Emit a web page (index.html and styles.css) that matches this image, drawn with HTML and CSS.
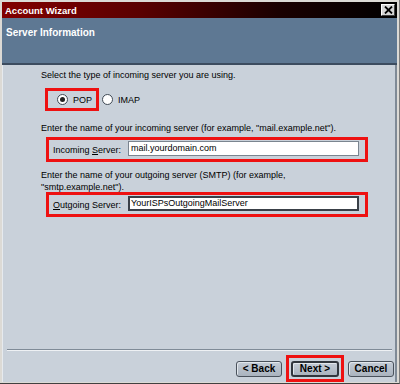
FILE: index.html
```html
<!DOCTYPE html>
<html>
<head>
<meta charset="utf-8">
<link rel="stylesheet" href="styles.css">
</head>
<body>
<div class="window">
  <div class="titlebar">
    <span class="title">Account Wizard</span>
    <span class="close"><svg width="9" height="8" viewBox="0 0 9 8"><path d="M1 0.5 L8 7.5 M8 0.5 L1 7.5" stroke="#000" stroke-width="1.8"/></svg></span>
  </div>
  <div class="header">Server Information</div>
  <div class="content">
    <p class="line l1">Select the type of incoming server you are using.</p>
    <div class="radios">
      <div class="hl pop"><span class="radio checked"></span><span>POP</span></div>
      <div class="imap"><span class="radio"></span><span>IMAP</span></div>
    </div>
    <p class="line l2">Enter the name of your incoming server (for example, "mail.example.net").</p>
    <div class="hl field in">
      <span class="lbl">Incoming <u>S</u>erver:</span>
      <span class="input">mail.yourdomain.com</span>
    </div>
    <p class="line l3">Enter the name of your outgoing server (SMTP) (for example,<br>"smtp.example.net").</p>
    <div class="hl field out">
      <span class="lbl"><u>O</u>utgoing Server:</span>
      <span class="input focus">YourISPsOutgoingMailServer</span>
    </div>
    <div class="spacer"></div>
    <div class="sep"></div>
    <div class="buttons">
      <span class="btn">&lt; Back</span>
      <span class="hl btnwrap"><span class="btn">Next &gt;</span></span>
      <span class="btn">Cancel</span>
    </div>
  </div>
</div>
</body>
</html>
```

FILE: styles.css
```css
* { box-sizing: border-box; }
html, body { margin: 0; padding: 0; }
body {
  width: 400px;
  height: 384px;
  overflow: hidden;
  font-family: "Liberation Sans", Arial, sans-serif;
  font-size: 9px;
  color: #000;
  background: #d4d0c8;
}
.window {
  width: 400px;
  height: 384px;
  padding: 2px 2px 1px 2px;
  background: #dcdad5;
  border-right: 1px solid #7d7d7d;
  border-bottom: 1px solid #404040;
  display: flex;
  flex-direction: column;
}
.titlebar {
  height: 16px;
  background: linear-gradient(to right, #820000 0%, #5a0000 35%, #1a0000 70%, #000 100%);
  display: flex;
  align-items: center;
  justify-content: space-between;
  padding: 0 2px 0 3px;
}
.title {
  color: #fff;
  font-weight: bold;
  font-size: 9.5px;
}
.close {
  width: 14px;
  height: 12px;
  background: #d6d6d6;
  border: 1px solid;
  border-color: #fff #404040 #404040 #fff;
  display: flex;
  align-items: center;
  justify-content: center;
}
.header {
  height: 47px;
  background: #5e7893;
  border-bottom: 2px solid #3c4c5f;
  color: #fff;
  font-weight: bold;
  font-size: 10px;
  padding: 9px 0 0 4px;
}
.content {
  flex: 1;
  background: #c9d1da;
  border-left: 1px solid #e6eaee;
  border-right: 2px solid #7f8a96;
  display: flex;
  flex-direction: column;
}
.line {
  margin: 0;
  padding-left: 38px;
  line-height: 12px;
  white-space: nowrap;
}
.l1 { margin-top: 4px; }
.radios {
  display: flex;
  align-items: center;
  margin-top: 7px;
  margin-left: 42px;
}
.hl {
  border: 3px solid #ee1111;
}
.pop {
  width: 54px;
  height: 23px;
  display: flex;
  align-items: center;
  padding-left: 9px;
  gap: 5px;
}
.imap {
  display: flex;
  align-items: center;
  gap: 5px;
  margin-left: 3px;
}
.radio {
  width: 11px;
  height: 11px;
  border-radius: 50%;
  background: #fff;
  border: 1px solid #404a55;
  display: inline-flex;
  align-items: center;
  justify-content: center;
}
.radio.checked::after {
  content: "";
  width: 5px;
  height: 5px;
  border-radius: 50%;
  background: #222;
}
.l2 { margin-top: 11px; }
.field {
  margin-left: 43px;
  width: 322px;
  height: 25px;
  display: flex;
  align-items: center;
  padding-left: 4px;
}
.in { margin-top: 3px; }
.lbl { width: 75px; }
.input {
  width: 231px;
  height: 15px;
  background: #fff;
  border: 1px solid #7b8590;
  padding: 0 0 0 2px;
  line-height: 13px;
  margin-top: -2px;
}
.input.focus {
  border: 2px solid #3a4048;
  line-height: 11px;
  padding-left: 1px;
}
.l3 { margin-top: 7px; }
.out { margin-top: -1px; }
.spacer { flex: 1; }
.sep {
  margin: 0 3px 0 4px;
  height: 2px;
  border-top: 1px solid #7f8b97;
  border-bottom: 1px solid #eef1f4;
}
.buttons {
  display: flex;
  justify-content: flex-end;
  align-items: center;
  gap: 5px;
  padding: 4px 1px 0 0;
  height: 31px;
}
.btn {
  display: inline-flex;
  align-items: center;
  justify-content: center;
  height: 16px;
  width: 46px;
  border: 1px solid #4a525c;
  border-radius: 3px;
  background: linear-gradient(#c4ccd6, #aab3be);
  box-shadow: inset 1px 1px 0 #e2e7ec;
  font-weight: bold;
  font-size: 10px;
}
.btnwrap {
  display: inline-flex;
  padding: 2px;
  margin: 0 -1px;
  height: 27px;
  align-items: center;
}
.btnwrap .btn {
  width: 48px;
  border: 2px solid #30363d;
}
```
